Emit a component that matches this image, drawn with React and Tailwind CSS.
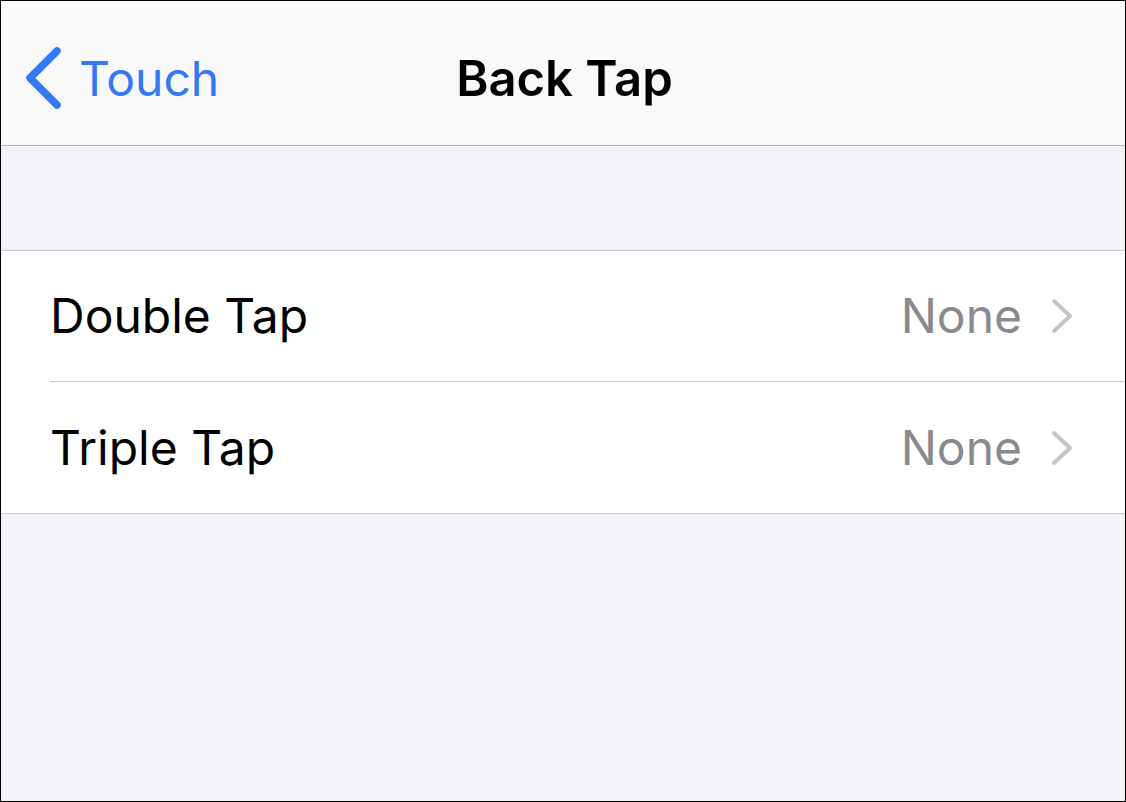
const font = { fontFamily: '"Inter", "Liberation Sans", sans-serif' };

const BackChevron = () => (
  <svg width="40" height="66" viewBox="0 0 40 66" className="shrink-0">
    <path
      d="M33 5 L6 32 L33 59"
      fill="none"
      stroke="#3478f6"
      strokeWidth="7.5"
      strokeLinecap="round"
      strokeLinejoin="round"
    />
  </svg>
);

const RowChevron = () => (
  <svg width="26" height="40" viewBox="0 0 26 40" className="shrink-0">
    <path
      d="M4 4 L20 19 L4 34"
      fill="none"
      stroke="#c4c4c7"
      strokeWidth="4"
      strokeLinecap="round"
      strokeLinejoin="round"
    />
  </svg>
);

const SettingRow = ({ label, value, last }) => (
  <div className="flex items-stretch h-[131px]">
    <div className={`flex flex-1 items-center ml-[49px] pr-[49px] ${last ? "" : "border-b border-[#c8c7cc]"}`}>
      <span className="text-[48px] leading-none text-black">{label}</span>
      <span className="ml-auto text-[48px] leading-none text-[#8a8a8e]">{value}</span>
      <div className="ml-[28px] mt-[2px]">
        <RowChevron />
      </div>
    </div>
  </div>
);

export default function App() {
  return (
    <div
      style={font}
      className="w-[1126px] h-[802px] border border-black bg-[#f2f2f7] flex flex-col overflow-hidden"
    >
      <header className="relative h-[145px] shrink-0 bg-[#f9f9f9] border-b border-[#b2b2b2] flex items-center pt-[11px]">
        <div className="flex items-center pl-[23px]">
          <BackChevron />
          <span className="ml-[15px] text-[48px] leading-none text-[#3478f6]">Touch</span>
        </div>
        <h1 className="absolute left-0 right-0 text-center text-[49px] leading-none font-semibold text-black pl-[3px]">
          Back Tap
        </h1>
      </header>

      <div className="h-[104px] shrink-0" />

      <div className="bg-white border-t border-b border-[#c8c7cc]">
        <SettingRow label="Double Tap" value="None" />
        <SettingRow label="Triple Tap" value="None" last />
      </div>
    </div>
  );
}
